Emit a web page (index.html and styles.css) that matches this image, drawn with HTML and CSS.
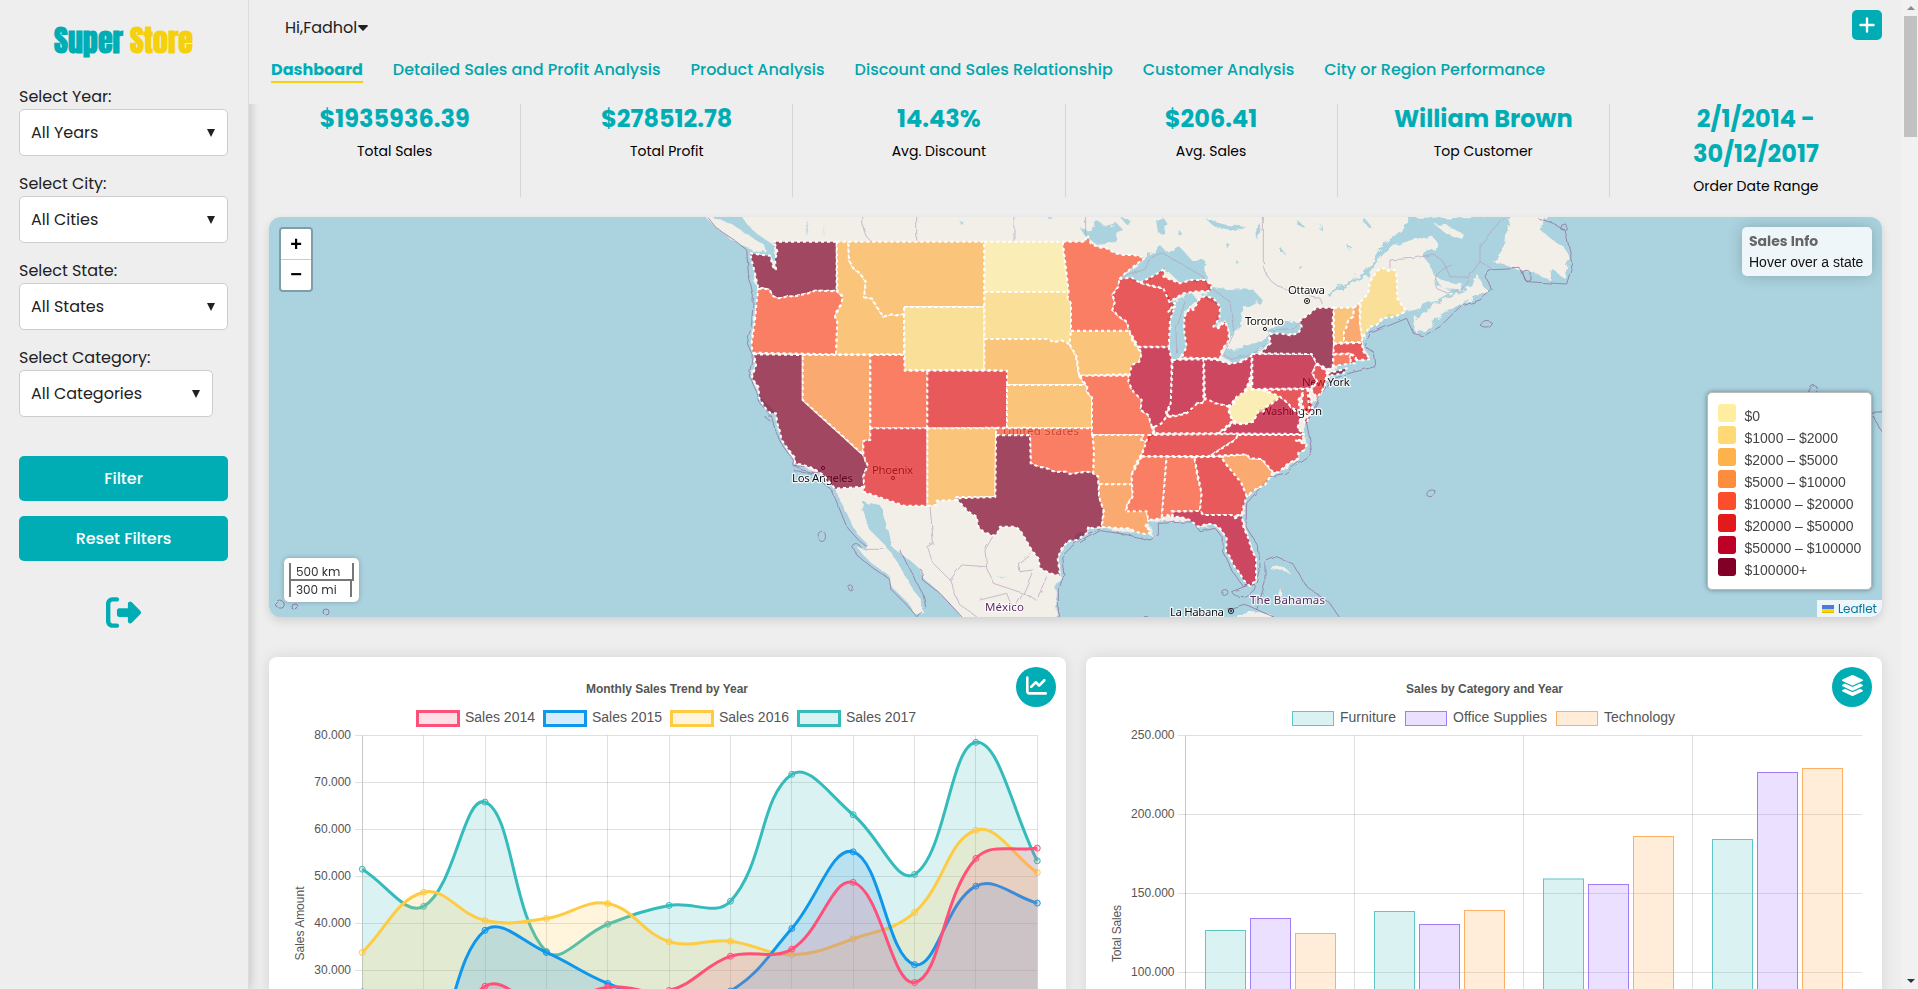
FILE: index.html
```html
<!DOCTYPE html>
<html lang="en">
<head>
<meta charset="utf-8">
<title>Super Store</title>
<link rel="stylesheet" href="styles.css">
</head>
<body>
<div class="app">
  <aside class="sidebar">
    <h1 class="logo"><span>Super</span> <span class="logo-accent">Store</span></h1>
    <div class="field"><label>Select Year:</label><div class="select">All Years<i></i></div></div>
    <div class="field"><label>Select City:</label><div class="select">All Cities<i></i></div></div>
    <div class="field"><label>Select State:</label><div class="select">All States<i></i></div></div>
    <div class="field"><label>Select Category:</label><div class="select select-short">All Categories<i></i></div></div>
    <div class="actions"><button class="btn">Filter</button><button class="btn">Reset Filters</button></div>
    <svg class="logout" viewBox="0 0 512 512"><path d="M377.9 105.9L500.7 228.7c7.2 7.2 11.3 17.1 11.3 27.3s-4.1 20.1-11.3 27.3L377.9 406.1c-6.4 6.4-15 9.9-24 9.9c-18.7 0-33.9-15.2-33.9-33.9l0-62.1-128 0c-17.7 0-32-14.3-32-32l0-64c0-17.7 14.3-32 32-32l128 0 0-62.1c0-18.7 15.2-33.9 33.9-33.9c9 0 17.6 3.6 24 9.9zM160 96L96 96c-17.7 0-32 14.3-32 32l0 256c0 17.7 14.3 32 32 32l64 0c17.7 0 32 14.3 32 32s-14.3 32-32 32l-64 0c-53 0-96-43-96-96L0 128C0 75 43 32 96 32l64 0c17.7 0 32 14.3 32 32s-14.3 32-32 32z"/></svg>
  </aside>

  <main class="main">
    <header class="header">
      <div class="topbar">
        <div class="user">Hi,Fadhol<svg viewBox="0 0 10 6"><path d="M1 0h8q1.200.200.600 1.200L5.600 5.400q-.600.500-1.200 0L.4 1.200Q-.200.200 1 0z"/></svg></div>
        <button class="add"><svg viewBox="0 0 16 16"><path d="M8 1.500v13M1.500 8h13"/></svg></button>
      </div>
      <nav class="nav">
        <a class="active">Dashboard</a><a>Detailed Sales and Profit Analysis</a><a>Product Analysis</a><a>Discount and Sales Relationship</a><a>Customer Analysis</a><a>City or Region Performance</a>
      </nav>
    </header>

    <section class="stats">
      <div class="stat"><strong>$1935936.39</strong><span>Total Sales</span></div>
      <div class="stat"><strong>$278512.78</strong><span>Total Profit</span></div>
      <div class="stat"><strong>14.43%</strong><span>Avg. Discount</span></div>
      <div class="stat"><strong>$206.41</strong><span>Avg. Sales</span></div>
      <div class="stat"><strong>William Brown</strong><span>Top Customer</span></div>
      <div class="stat"><strong>2/1/2014 -<br>30/12/2017</strong><span>Order Date Range</span></div>
    </section>

    <section class="map">
      <svg class="map-canvas" viewBox="269 217 1613 400">
        <defs>
          <filter id="rough" x="-5%" y="-5%" width="110%" height="110%"><feTurbulence type="fractalNoise" baseFrequency=".12" numOctaves="3" seed="4"/><feDisplacementMap in="SourceGraphic" scale="8"/></filter>
          <filter id="rough2" x="-5%" y="-5%" width="110%" height="110%"><feTurbulence type="fractalNoise" baseFrequency=".09" numOctaves="2" seed="7"/><feDisplacementMap in="SourceGraphic" scale="4"/></filter>
        </defs>
        <g class="land" filter="url(#rough)">
          <g transform="translate(700 210) scale(.33333)">
            <path d="M20 0L45 28 95 42 150 78 200 112 190 132 140 113 85 82 45 50 15 20z"/>
            <path d="M110 0L150 55 200 92 222 105 230 178 216 140 150 130 172 235 155 400 165 440 155 500 180 560 225 605 245 690 285 760 370 795 405 836 440 910 470 970 505 1005 500 1022 470 1010 490 1035 515 1060 565 1095 575 1130 625 1180 645 1215 668 1205 665 1170 640 1140 600 1070 560 1010 510 960 485 895 490 875 540 885 558 940 575 1010 620 1045 665 1080 665 1100 700 1130 750 1180 800 1240H1070L1070 1130 1080 1097 1075 1045 1105 995 1165 955 1300 955V0z"/>
          </g>
          <g transform="translate(1080 210) scale(.33333)">
            <path d="M-10 0H995L965 60 915 100 882 150 850 190 740 250 745 258 862 195 895 150 930 112 1000 88 1060 80 1075 105 1030 140 1050 165 1062 195 1070 228 1115 245 1060 275 1000 302 975 305 905 327 855 370 850 410 870 445 770 470 735 525 700 590 680 630 675 675 680 705 655 745 595 787 500 858 487 915 503 985 530 1045 528 1110 510 1128 470 1080 440 1025 440 985 400 942 355 950 330 930 205 935 215 975 165 968 65 955 -10 955z"/>
            <path d="M1000 340L1015 312 1080 272 1140 247 1160 242 1195 195 1210 230 1225 242 1150 275 1080 320 1040 362 1010 372z"/>
            <path d="M1060 195L1085 210 1150 225 1140 240 1090 238z"/>
            <path d="M1300 10H1410L1380 60 1430 100 1452 110 1472 150 1455 180 1460 210 1420 180 1410 210 1390 205 1370 188 1330 182 1240 155 1275 110 1280 60z"/>
            <path d="M1062 42L1112 50 1155 78 1150 88 1100 72z"/>
            <path d="M1000 0H1240L1200 24 1010 26z"/>
            <path d="M445 1230Q480 1205 540 1207L610 1230zM598 1130l10 30-18-2zM570 1070q45-10 64 25-20-18-64-20z"/>
          </g>
        </g>
        <g class="water" filter="url(#rough)">
          <g transform="translate(1080 210) scale(.33333)">
            <path d="M120 203L170 172 195 145 240 105 262 128 300 112 335 150 375 152 378 210 300 218 260 180 180 215z"/>
            <path d="M270 278L335 248 350 270 320 300 312 350 320 410 300 447 275 450 267 400z"/>
            <path d="M390 230L440 237 520 240 545 268 500 290 482 310 490 332 470 360 450 385 440 335 400 355 420 290 370 262z"/>
            <path d="M420 436L460 418 530 398 572 375 560 402 510 442 460 460z"/>
            <path d="M560 360L640 333 665 340 658 372 570 372z"/>
            <path d="M228 30l20-8 14 20-8 24-20 2zM0 55l30 5 20 20 30-30 30-10 20 20-30 10-15 30-40-5-25-10zM380 30l60 15 60 5-30 15-70-18zM520 60l20-20 8 25-18 20zM120 20l30 10-10 14zM800 105l15 5-8 10zM650 30l20 15-14 4zM720 40l8 22-10-6zM300 60l10 20-12-3zM600 110l15 20-20-8zM660 160l10 20-8 2zM440 100l15 8-10 10zM470 150l10 12-12-2zM860 30l12 20-14-4z"/>
          </g>
          <g transform="translate(700 210) scale(.33333)">
            <path d="M1175 60l20-25 25 15 30-15V95l-60 10-20-20zM375 25l-8 30 12 30-12-25zM320 25l6 30-8 25zM775 30l18 6-12 5zM1040 22h18l-8 7zM115 30l35 20 15 25 35 15 10 15-35-15-30-30zM890 1100l32 3-20-6z"/>
          </g>
        </g>
        <g class="marine" filter="url(#rough2)">
          <g transform="translate(700 210) scale(.33333)">
            <path d="M22 20L50 55 110 95 140 120 145 190 160 260 155 340 142 400 157 435 148 500 170 545 180 580 215 620 225 660 250 710 280 750 285 785 340 790 370 820 395 840 420 900 440 950 475 990 500 1010 M470 1035L455 1008Q470 990 485 1015M470 1035L520 1075 565 1105 575 1140 625 1190 650 1220 678 1195 670 1155 625 1070 600 1020M665 1080L668 1110 720 1150 790 1225M1075 1225V1140L1092 1095 1085 1040 1120 1005 1165 970 1200 957"/>
            <path d="M355 970q12-12 20 0 5 20-8 25-16-2-12-25zM446 1133a7 7 0 1 0 14 4 7 7 0 1 0-14-4M195 620q12-12 20 2-4 18-20-2zM285 770q40-10 80 15-30 10-80-15z"/>
            <path class="province" d="M488 20Q485 75 515 95M650 20V93M942 20V93M1157 20V75M690 890L700 1000 680 1010 700 1060 750 1110 785 1065 860 1070M860 1070L855 1020 880 977M860 1070L880 1120 970 1150 1000 1080 960 1085 955 1060 990 1030M750 1110L775 1180 830 1220M970 1150L940 1200 920 1150 840 1170M970 1150L1010 1170 1040 1100M500 1018H555"/>
          </g>
          <g transform="translate(1080 210) scale(.33333)">
            <path d="M0 998L60 962 130 972 210 990 235 975 235 940 340 935 360 965 405 955 430 985 428 1025 455 1080 490 1130 520 1120M528 1120L540 1070 535 1010 498 950 500 880 570 800 615 790 655 758 695 730 690 690 680 640 720 560 750 510 800 492 885 470 880 425 855 410 870 370 980 325 1000 370 1030 378 1080 350 1140 290 1200 270 1237 240 1215 200 1225 180 1320 175 1340 215 1460 222 1478 160 1455 60 1420 40 1375 25M455 1145Q490 1130 520 1120 540 1140 490 1160 460 1160 455 1145M530 1200L555 1120 555 1055 590 1040 640 1062 680 1130 750 1180 780 1225M445 1200L500 1185 590 1225M425 1147a9 8 0 1 0 19 0 9 8 0 1 0-19 0M190 1222q8-6 16 0"/>
            <path d="M1040 850q8-15 25-8 0 18-16 18-10 0-9-10zM1202 342q15-20 35-3-5 20-25 14-12-3-10-11zM1440 50a10 10 0 1 0 20 0 10 10 0 1 0-20 0M1328 185q15-10 25 5v20q-15 10-20-5z"/>
            <path class="province" d="M550 20V170Q560 220 620 240L720 265 730 285M930 175V150L1000 145 1060 132 1090 155 1110 200 1165 202 1200 155 1200 105 1270 22M1115 165Q1050 190 1070 235 1130 270 1165 205M1200 155L1235 175M120 205L195 178 210 145 245 128 370 200 380 225 450 275 462 370 430 435 455 448 520 430 570 395M290 430L288 360 315 275M570 360L650 355 665 325"/>
          </g>
          <path d="M275 603q5-6 9 0 1 6-5 5-4-1-4-5zM291 606a3 3 0 1 0 6 0 3 3 0 1 0-6 0M323 612a3 3 0 1 0 6 0 3 3 0 1 0-6 0M1808 394q3-12 9-7l1 7M1871 412h12M1872 415l11 18"/>
        </g>
        <g class="labels">
          <text x="1288" y="294" textLength="37">Ottawa</text>
          <text x="1245" y="324.500" textLength="39">Toronto</text>
          <text x="1302" y="386" textLength="48">New York</text>
          <text x="1261" y="415" textLength="61">Washington</text>
          <text x="792" y="481.500" textLength="61">Los Angeles</text>
          <text x="872" y="473.500" textLength="41">Phoenix</text>
          <text class="country" x="1003" y="435" textLength="76">United States</text>
          <text class="country" x="985" y="610.500" textLength="39">México</text>
          <text x="1170" y="615.500" textLength="54">La Habana</text>
          <text class="country" x="1250" y="603.500" textLength="75">The Bahamas</text>
          <g class="town"><circle cx="1307" cy="301" r="2.600"/><circle cx="1307" cy="301" r=".7"/><circle cx="1231" cy="611" r="2.600"/><circle cx="1231" cy="611" r=".7"/><circle cx="1265" cy="329" r="1.600"/><circle cx="893" cy="478" r="1.600"/><circle cx="823" cy="468" r="1.600"/></g>
        </g>
        <g class="states">
          <g transform="translate(700 210) scale(.33333)">
            <path class="s8" d="M150 130L180 134 210 137 216 160 222 178 228 178 225 150 232 125 226 105 218 95H410V242H345L325 250 300 255 280 260 265 258 245 264 230 265 215 255 210 240 190 234 175 235 165 190z"/>
            <path class="s5" d="M175 237L195 236 210 240 215 255 230 265 245 264 265 258 280 260 300 255 325 250 345 242 412 244 418 255 428 258 425 280 405 312 405 322 412 335 408 433 158 428 155 400 165 330 170 275z"/>
            <path class="s8" d="M162 433L308 435V570L490 735 497 755 505 766 495 785 490 800 493 830 405 836 385 812 370 795 340 775 310 765 285 760 284 742 262 715 245 690 240 665 232 640 228 610 212 610 198 597 178 565 175 530 155 505 160 490 168 465z"/>
            <path class="s4" d="M308 435H511V690L490 693 488 733 308 570z"/>
            <path class="s3" d="M410 95H445L447 150 460 175 480 190 497 215 495 240 492 262 515 265 530 290 550 320 575 313 590 316 612 310V433H408L412 335 405 318 425 280 428 258 412 244z"/>
            <path class="s3" d="M445 95H853V291H612V312L590 316 575 313 550 320 530 290 515 265 492 262 495 240 497 215 480 190 460 175 447 150z"/>
            <path class="s2" d="M612 291H853V480H614z"/><path class="s5" d="M511 435H612L614 482H682V655H511z"/>
            <path class="s6" d="M682 482H921V653L682 655z"/>
            <path class="s6" d="M511 655H682V887H612L490 845 493 828 490 800 503 766 490 735V693L511 690z"/>
            <path class="s3" d="M682 655H888L886 861H765L768 870 710 872 708 885 682 887z"/>
            <path class="s1" d="M853 95H1088L1093 140 1100 200 1106 246H853z"/>
            <path class="s2" d="M853 246H1106L1103 265 1113 280V380L1108 402 1085 392 1060 397 1045 388H853z"/>
            <path class="s3" d="M853 387H1045L1060 397 1085 392 1108 402 1122 425 1130 450 1136 495 1155 525H921V482L853 480z"/>
            <path class="s3" d="M921 525H1155L1165 532 1160 545 1176 562V655L921 653z"/>
            <path class="s5" d="M888 655H1176L1182 720 1180 790 1160 785 1140 788 1110 792 1095 785 1065 786 1040 775 1015 770 992 760 990 676H888z"/>
            <path class="s8" d="M888 676H990L992 760 1015 770 1040 775 1065 786 1095 785 1110 792 1140 788 1160 785 1180 790 1195 800 1197 860 1211 900 1205 950 1180 955 1165 950 1160 970 1130 990 1105 993 1085 1015 1073 1045 1080 1097 1050 1090 1020 1075 1015 1045 995 1020 975 985 960 960 945 950 900 950 892 970 880 977 850 965 835 950 830 920 805 905 768 865 886 861z"/>
          </g>
          <g transform="translate(1080 210) scale(.33333)">
            <path class="s5" d="M-52 95H15L22 75 32 100 55 112 80 115 105 130 130 135 160 135 195 143 160 170 135 190 120 205 115 230 97 255 105 275 97 300 120 322 140 335 148 362H-27V280L-37 265-34 246-45 150z"/>
            <path class="s3" d="M-27 363H148L158 395 185 430 178 455 158 465 155 492-2 497-10 440-32 402z"/>
            <path class="s5" d="M-2 497H145L150 530 185 570 182 600 205 615 215 650 220 673 205 700 183 690 190 675H36V562L20 545 22 530z"/>
            <path class="s4" d="M38 675H190L183 690 205 700 192 715 180 740 165 765 155 795V823H55V800L40 790 42 720z"/>
            <path class="s4" d="M57 823H155L158 860 143 880 137 900H200L205 935 195 950 215 965 195 972 165 965 150 955 120 955 65 950 72 905 57 860z"/>
            <path class="s6" d="M118 207L155 203 180 218 220 230 250 235 270 260 268 275 285 280 265 305 285 290 270 330 266 410H175L148 362 140 335 120 322 97 300 105 275 97 255 115 230z"/>
            <path class="s6" d="M180 218L225 195 255 175 250 200 275 210 300 220 335 210 375 210 395 225 392 242 340 245 310 250 290 262 268 275 250 235z"/>
            <path class="s6" d="M313 320L330 295 340 300 358 268 375 258 400 265 420 290 418 325 400 350 415 355 435 335 445 360 447 390 425 420 420 445 305 443 320 410 313 365z"/>
            <path class="s7" d="M175 412H266L275 450 273 580 258 605 260 620 245 640 235 648 215 648 205 615 182 600 185 570 160 545 145 515 155 465 178 455 185 430z"/>
            <path class="s7" d="M278 450L370 448V578L350 580 335 605 310 610 290 618 262 615 272 580z"/>
            <path class="s7" d="M372 448L410 450 450 462 485 455 515 437 513 490 505 520 490 550 460 570 455 587 430 585 405 580 375 568z"/>
            <path class="s6" d="M222 670L225 650 245 640 258 622 290 618 320 610 350 582 370 578 378 565 405 580 430 585 445 590 447 610 458 632 415 670z"/>
            <path class="s6" d="M205 675L475 672 465 690 440 705 415 722 390 738H185z"/>
            <path class="s5" d="M185 740H260L245 925 205 930 200 904H137L145 880 158 860 155 795z"/>
            <path class="s5" d="M260 740L343 742 352 800 365 850 360 903H275L277 922 262 915 245 928z"/>
            <path class="s6" d="M343 742L423 740 440 765 480 810 500 858 490 890 485 915 465 915 460 925 455 915H370L360 903 365 850z"/>
            <path class="s7" d="M275 905L360 903 370 915H455L465 925 485 915 490 950 505 985 515 1020 528 1045V1110L510 1128 490 1110 480 1090 460 1065 450 1040 438 1025 440 985 420 955 400 942 380 942 355 950 330 930 300 920 280 922z"/>
            <path class="s4" d="M423 740L500 733 510 745 545 747 578 787 555 825 530 835 500 858 485 820 440 765z"/>
            <path class="s6" d="M475 675H672L665 690 645 690 680 705 670 722 655 728 655 745 625 760 595 787 578 785 545 747 510 745 500 733 390 738 415 722 465 690z"/>
            <path class="s7" d="M415 670L435 660 458 640 490 643 520 635 535 600 560 590 580 570 600 560 625 580 635 595 655 610 660 630 652 655 672 672zM690 610L680 640 672 635z"/>
            <path class="s1" d="M445 590L460 585 470 560 495 545 510 525 517 540 545 538 560 548 590 545 610 548 585 575 560 590 550 605 535 605 520 635 490 643 458 632 450 610z"/>
            <path class="s7" d="M517 432H695L710 460 697 490 712 515 690 535 517 537z"/>
            <path class="s8" d="M540 430L572 400 568 373 600 370 630 376 655 370 665 350 660 332 690 310 710 293H762L757 340 762 400 758 470 745 478 710 460 695 432zM742 490L775 482 800 475 790 490 750 497z"/>
            <path class="s3" d="M762 293H822L820 320 805 330 800 350 792 370V397L762 400z"/>
            <path class="s4" d="M822 293L838 280 840 340 847 385 845 397H792L792 365 800 350 805 330 820 320z"/>
            <path class="s2" d="M842 275L865 250 870 215 890 185 905 172 920 182 945 180 950 200 952 265 965 285 978 303 945 320 905 325 890 345 870 350 855 370 847 385 840 340z"/>
            <path class="s6" d="M762 402L845 398 850 425 872 448 830 450 815 430 760 432z"/>
            <path class="s5" d="M760 434L810 432 812 460 760 468z"/><path class="s6" d="M812 434L828 440 825 460 812 460z"/>
            <path class="s6" d="M710 462L740 485 735 525 725 545 710 562 695 540 712 515 697 490z"/>
            <path class="s6" d="M555 540L685 537 695 600 690 612 675 605 665 580 670 545 655 570 660 600 635 595 625 580 600 560z"/>
            <path class="s6" d="M682 537L698 590 688 600z"/>
          </g>
        </g>
      </svg>
      <div class="zoom"><button>+</button><button>−</button></div>
      <div class="info"><b>Sales Info</b><span>Hover over a state</span></div>
      <div class="legend">
        <div><i class="c1"></i>$0</div><div><i class="c2"></i>$1000 – $2000</div><div><i class="c3"></i>$2000 – $5000</div><div><i class="c4"></i>$5000 – $10000</div><div><i class="c5"></i>$10000 – $20000</div><div><i class="c6"></i>$20000 – $50000</div><div><i class="c7"></i>$50000 – $100000</div><div><i class="c8"></i>$100000+</div>
      </div>
      <div class="scale"><span class="km">500 km</span><span class="mi">300 mi</span></div>
      <div class="credit"><svg viewBox="0 0 12 8"><path fill="#4C7BE1" d="M0 0h12v4H0z"/><path fill="#FFD500" d="M0 4h12v3H0z"/><path fill="#E0BC00" d="M0 7h12v1H0z"/></svg>Leaflet</div>
    </section>

    <section class="charts">
      <article class="card">
        <svg class="chart" id="trend" viewBox="269 657 797 343"></svg>
        <button class="round"><svg viewBox="0 0 512 512"><path d="M64 64c0-17.700-14.300-32-32-32S0 46.300 0 64V400c0 44.200 35.800 80 80 80H480c17.700 0 32-14.300 32-32s-14.300-32-32-32H80c-8.800 0-16-7.200-16-16V64zm406.600 86.600c12.500-12.500 12.500-32.800 0-45.300s-32.800-12.500-45.300 0L320 210.700l-57.400-57.400c-12.500-12.500-32.800-12.500-45.300 0l-112 112c-12.500 12.500-12.500 32.800 0 45.300s32.800 12.500 45.300 0L240 221.300l57.400 57.400c12.500 12.500 32.800 12.500 45.300 0l128-128z"/></svg></button>
      </article>
      <article class="card">
        <svg class="chart" id="category" viewBox="1086 657 796 343"></svg>
        <button class="round"><svg viewBox="0 0 512 512"><path d="M12.410 148.020l232.940 105.670c6.800 3.090 14.490 3.090 21.290 0l232.940-105.670c16.550-7.510 16.550-32.520 0-40.030L266.650 2.310a25.607 25.607 0 0 0-21.290 0L12.410 107.980c-16.550 7.510-16.550 32.530 0 40.040zm487.180 88.280l-58.090-26.330-161.640 73.270c-7.560 3.430-15.590 5.170-23.860 5.170s-16.290-1.740-23.860-5.170L70.510 209.970l-58.100 26.330c-16.550 7.500-16.550 32.500 0 40l232.940 105.590c6.800 3.080 14.490 3.080 21.290 0L499.590 276.300c16.550-7.500 16.550-32.500 0-40zm0 127.800l-57.870-26.230-161.860 73.370c-7.560 3.430-15.590 5.170-23.860 5.170s-16.290-1.740-23.860-5.170L70.290 337.870 12.410 364.100c-16.550 7.500-16.550 32.500 0 40l232.940 105.590c6.800 3.080 14.490 3.080 21.290 0L499.590 404.100c16.550-7.500 16.550-32.500 0-40z"/></svg></button>
      </article>
    </section>
  </main>
  <div class="scrollbar"><i class="up"></i><div class="thumb"></div><i class="down"></i></div>
</div>
<script src="charts.js"></script>
</body>
</html>
```
FILE: styles.css
```css
*{box-sizing:border-box}
body{margin:0;background:#eee;font-family:Poppins,Inter,"Open Sans",sans-serif;color:#212121;overflow:hidden}
button{border:0;padding:0;font:inherit;cursor:pointer}
.app{display:flex;height:989px;overflow:hidden}

.sidebar{width:249px;flex:none;padding:22px 20px 0 19px;background:#eee;box-shadow:1px 0 10px rgba(0,0,0,.2);display:flex;flex-direction:column;position:relative;border-right:1px solid #ddd}
.logo{margin:0 0 24px;height:39px;line-height:37px;font-family:Anton,Roboto,sans-serif;font-weight:700;font-size:30px;color:#00adb5;text-align:center;white-space:nowrap}
.logo-accent{color:#f5d00c}
.field{height:87px}
.field label{display:block;height:24px;line-height:24px;font-size:16px}
.select{height:47px;border:1px solid #ccc;border-radius:5px;background:#fff;display:flex;align-items:center;justify-content:space-between;padding:0 12px 0 11px;font-size:16px}
.select i{border:4.500px solid transparent;border-top:8px solid #212121;border-bottom:0}
.select-short{width:194px}
.actions{display:flex;flex-direction:column;gap:15px;margin-top:23px}
.btn{height:45px;border-radius:5px;background:#00adb5;color:#fff;font-size:16px;font-weight:500}
.logout{width:35px;height:35px;fill:#00adb5;margin:34px auto 0;display:block}

.main{width:1653px;flex:none;display:flex;flex-direction:column}
.header{height:104px;flex:none;background:#eee;padding:0 20px 0 22px;position:relative;z-index:1}
.topbar{height:55px;display:flex;justify-content:space-between;padding:10px 0 0 14px}
.user{height:35px;line-height:35px;font-size:16px;display:flex;align-items:center}
.user svg{width:10px;height:6px;margin-left:1px;fill:#212121}
.add{width:30px;height:30px;border-radius:5px;background:#00adb5}
.add svg{width:16px;height:16px;display:block;margin:auto;fill:none;stroke:#fff;stroke-width:2.400;stroke-linecap:round}
.nav{display:flex;gap:30px}
.nav a{height:28px;line-height:30px;font-size:16px;font-weight:500;color:#00a5ad;white-space:nowrap}
.nav .active{font-weight:700;border-bottom:2px solid #f5d00c;color:#00adb5}

.stats{display:grid;grid-template-columns:repeat(6,1fr);gap:20px;margin:0 20px;height:91px;flex:none}
.stat{border-right:1px solid #d5d5d5;text-align:center;display:flex;flex-direction:column}
.stat:last-child{border-right:0}
.stat strong{font-size:24px;line-height:35px;font-weight:700;color:#00adb5;margin-top:-3px}
.stat span{font-size:14px;line-height:21px;margin-top:5px;color:#000}

.map{position:relative;height:400px;margin:22px 20px 0;border-radius:12px;background:#aad3df;overflow:hidden;flex:none;box-shadow:0 4px 10px rgba(0,0,0,.12)}
.map-canvas{display:block;width:1613px;height:400px}
.land{fill:#f2efe9}
.water{fill:#aad3df}
.marine path{fill:none;stroke:#8e6b9b;stroke-width:2.600;opacity:.85;stroke-linejoin:round}
.marine>path{stroke-width:1}
.marine .province{stroke:#b79dbd;stroke-width:2.400}
.labels text{font-family:"Noto Sans",sans-serif;font-size:11.500px;fill:#111;stroke:#fff;stroke-opacity:.8;stroke-width:2.500px;paint-order:stroke;stroke-linejoin:round}
.labels .country{fill:#5d2a66}
.town{fill:none;stroke:#222;stroke-width:1}
.states path{stroke:#fff;stroke-width:6;stroke-dasharray:9;fill-opacity:.7;stroke-linejoin:round;stroke-linecap:butt}
.states .s1{fill:#ffeda0}.states .s2{fill:#fed976}.states .s3{fill:#feb24c}.states .s4{fill:#fd8d3c}
.states .s5{fill:#fc4e2a}.states .s6{fill:#e31a1c}.states .s7{fill:#bd0026}.states .s8{fill:#800026}
.zoom{position:absolute;left:10px;top:10px;width:34px;border:2px solid rgba(0,0,0,.25);border-radius:4px;background-clip:padding-box}
.zoom button{display:block;width:30px;height:30px;background:#fff;font:bold 20px/28px "Liberation Sans",sans-serif;color:#000}
.zoom button:first-child{height:31px;border-bottom:1px solid #ccc;border-radius:2px 2px 0 0}
.zoom button:last-child{border-radius:0 0 2px 2px;padding-bottom:2px}
.info{position:absolute;right:10px;top:10px;width:130px;height:49px;padding:5px 7px;border-radius:5px;background:rgba(255,255,255,.8);box-shadow:0 0 15px rgba(0,0,0,.2);display:flex;flex-direction:column;color:#111}
.info b{font-size:14px;line-height:19px;color:#666}
.info span{font:14px/22px "Liberation Sans",sans-serif;white-space:nowrap}
.legend{position:absolute;right:10px;bottom:27px;width:165px;height:198px;padding:11px 10px;border:1px solid #bbb;border-radius:5px;background:#fff;box-shadow:0 0 5px rgba(0,0,0,.4);font:14px/25px "Liberation Sans",sans-serif;color:#444;white-space:nowrap}
.legend div{height:22px;display:flex}
.legend i{width:18px;height:18px;flex:none;border-radius:3px;margin-right:8.500px}
.c1{background:#ffeda0}.c2{background:#fed976}.c3{background:#feb24c}.c4{background:#fd8d3c}.c5{background:#fc4e2a}.c6{background:#e31a1c}.c7{background:#bd0026}.c8{background:#800026}
.scale{position:absolute;left:15px;bottom:15px;width:75px;height:44px;padding:5px;border-radius:5px;background:#fff;box-shadow:0 0 5px rgba(0,0,0,.25);font-size:12px;color:#333}
.scale span{display:block;border:2px solid #777;padding-left:5px;height:18px;line-height:17px}
.scale .km{border-top:0;width:65px}
.scale .mi{border-top:0;border-bottom:0;width:63px;height:16px;line-height:17px}
.credit{position:absolute;right:0;bottom:0;width:65px;height:17px;background:rgba(255,255,255,.8);display:flex;align-items:center;font-size:12px;color:#0078a8;padding-left:5px;letter-spacing:-.1px}
.credit svg{width:12px;height:8px;margin-right:4px}

.charts{display:grid;grid-template-columns:797px 796px;gap:20px;margin:40px 20px 0;flex:none}
.card{height:343px;position:relative;background:#fff;border-radius:8px 8px 0 0;box-shadow:0 0 15px rgba(0,0,0,.1)}
.chart{display:block;width:100%;height:343px;font-family:"Liberation Sans",sans-serif;font-size:12px;fill:#555}
.chart .title{font-weight:700;fill:#555}
.chart .key{font-size:14px}
.round{position:absolute;right:10px;top:10px;width:40px;height:40px;border-radius:50%;background:#00adb5}
.round svg{display:block;width:21px;height:21px;margin:-3px auto 0;fill:#fff}

.scrollbar{width:16px;flex:none;background:#f1f1f1;display:flex;flex-direction:column;align-items:center;padding:6px 0 6px 1px}
.scrollbar i{border:4px solid transparent}
.scrollbar .up{border-top:0;border-bottom:4px solid #8a8a8a}
.scrollbar .down{border-bottom:0;border-top:4px solid #333;margin-top:auto}
.thumb{width:13px;height:121px;margin-top:6px;background:#c1c1c1}
```
FILE: charts.js
```js
const NS = 'http://www.w3.org/2000/svg';

function add(parent, tag, attrs, text) {
  const el = document.createElementNS(NS, tag);
  for (const k in attrs) el.setAttribute(k, attrs[k]);
  if (text) el.textContent = text;
  parent.appendChild(el);
  return el;
}

function line(svg, x1, y1, x2, y2, color) {
  add(svg, 'line', { x1, y1, x2, y2, stroke: color || 'rgba(0,0,0,.12)' });
}

// Cubic spline through the points, tension 0.4.
function spline(pts) {
  const t = 0.4;
  const ctl = pts.map((p, i) => {
    const a = pts[i - 1] || p, b = pts[i + 1] || p;
    const d1 = Math.hypot(p[0] - a[0], p[1] - a[1]);
    const d2 = Math.hypot(b[0] - p[0], b[1] - p[1]);
    const f1 = t * d1 / (d1 + d2), f2 = t * d2 / (d1 + d2);
    const cap = y => Math.max(735, y);
    return [
      [p[0] - f1 * (b[0] - a[0]), cap(p[1] - f1 * (b[1] - a[1]))],
      [p[0] + f2 * (b[0] - a[0]), cap(p[1] + f2 * (b[1] - a[1]))]
    ];
  });
  return pts.map((p, i) => i ? `C${ctl[i - 1][1]} ${ctl[i][0]} ${p}` : `M${p}`).join('');
}

const trend = document.getElementById('trend');
add(trend, 'text', { x: 586, y: 693, class: 'title', textLength: 162 }, 'Monthly Sales Trend by Year');
const series = [
  { name: 'Sales 2014', x: 416, color: '#ff5079', fill: 'rgba(255,99,132,.2)', v: [14, 5, 26.6, 22.5, 26.4, 25.7, 33, 34.5, 48.7, 27.4, 53.8, 56] },
  { name: 'Sales 2015', x: 543, color: '#0f97ec', fill: 'rgba(54,162,235,.2)', v: [25.4, 12, 38.5, 33.8, 27.2, 23.5, 25.6, 38.9, 55.2, 31.2, 47.9, 44.3] },
  { name: 'Sales 2016', x: 670, color: '#ffcb43', fill: 'rgba(255,206,86,.2)', v: [33.8, 46.6, 40.6, 41, 44.2, 36.1, 36.2, 33.3, 36.7, 42.3, 59.8, 50.8] },
  { name: 'Sales 2017', x: 797, color: '#35bbbb', fill: 'rgba(75,192,192,.2)', v: [51.5, 43.6, 65.8, 34, 39.8, 43.8, 44.7, 71.7, 63.1, 50.4, 78.5, 53.3] }
];
for (let v = 80; v >= 30; v -= 10) {
  const y = 735.5 + (80 - v) * 4.7;
  line(trend, 355, y, 1037.5, y);
  add(trend, 'text', { x: 351, y: y + 3.5, 'text-anchor': 'end' }, v + '.000');
}
for (let i = 0; i < 12; i++) {
  const x = Math.floor(362.3 + i * 61.36) + 0.5;
  line(trend, x, 735.5, x, 1000, i ? '' : '#c8c8c8');
}
add(trend, 'text', { transform: 'translate(303.500 960.500) rotate(-90)', textLength: 74 }, 'Sales Amount');
for (const s of series) {
  add(trend, 'rect', { x: s.x + 1.5, y: 711.5, width: 41, height: 14, fill: s.fill, stroke: s.color, 'stroke-width': 3 });
  add(trend, 'text', { x: s.x + 49, y: 722, class: 'key', textLength: 70 }, s.name);
}
for (const s of series.slice().reverse()) {
  const pts = s.v.map((v, i) => [362.3 + i * 61.36, 735.3 + (80 - v) * 4.7]);
  const d = spline(pts);
  add(trend, 'path', { d: d + 'V1200H362.3Z', fill: s.fill });
  add(trend, 'path', { d, fill: 'none', stroke: s.color, 'stroke-width': 3 });
  for (const p of pts) add(trend, 'circle', { cx: p[0], cy: p[1], r: 3, fill: s.fill, stroke: s.color });
}

const cat = document.getElementById('category');
add(cat, 'text', { x: 1406, y: 693, class: 'title', textLength: 157 }, 'Sales by Category and Year');
const groups = [
  { name: 'Furniture', x: 1292.5, w: 56, color: '#5ec6c6', fill: 'rgba(75,192,192,.2)', tops: [930.5, 911.5, 879, 839.5] },
  { name: 'Office Supplies', x: 1405.5, w: 94, color: '#a27dfa', fill: 'rgba(153,102,255,.2)', tops: [918.5, 924.5, 884.5, 772.5] },
  { name: 'Technology', x: 1556.5, w: 71, color: '#fbb066', fill: 'rgba(255,159,64,.2)', tops: [933.5, 910.5, 836.5, 768.5] }
];
for (let i = 0; i < 4; i++) {
  const y = 735.5 + i * 79;
  line(cat, 1178, y, 1862, y);
  add(cat, 'text', { x: 1174.5, y: y + 3.5, 'text-anchor': 'end' }, (250 - i * 50) + '.000');
  line(cat, 1185.5 + i * 169, 735.5, 1185.5 + i * 169, 1000, i ? '' : '#c8c8c8');
}
add(cat, 'text', { transform: 'translate(1120.500 962) rotate(-90)', textLength: 57 }, 'Total Sales');
groups.forEach((g, gi) => {
  add(cat, 'rect', { x: g.x, y: 711.5, width: 41, height: 14, fill: g.fill, stroke: g.color });
  add(cat, 'text', { x: g.x + 47.5, y: 722, class: 'key', textLength: g.w }, g.name);
  g.tops.forEach((top, i) => {
    add(cat, 'rect', { x: 1205.5 + i * 169 + gi * 45, y: top, width: 40, height: 300, fill: g.fill, stroke: g.color });
  });
});
```
